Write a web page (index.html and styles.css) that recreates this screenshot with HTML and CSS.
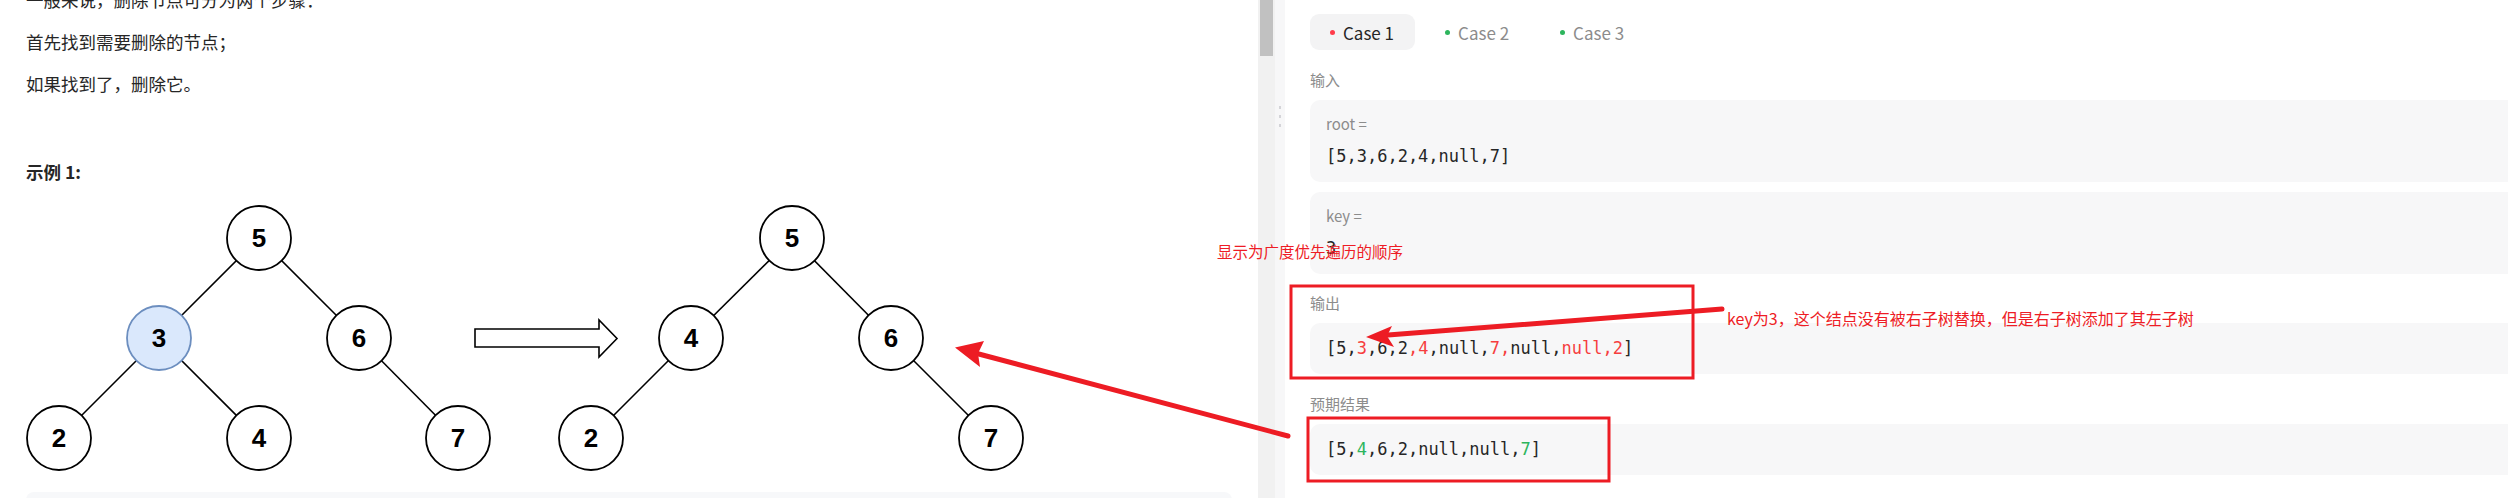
FILE: index.html
```html
<!DOCTYPE html>
<html lang="zh">
<head>
<meta charset="utf-8">
<title>删除二叉搜索树中的节点</title>
<link rel="stylesheet" href="styles.css">
</head>
<body>
<div class="page">
  <div class="left">
    <p class="para">一般来说，删除节点可分为两个步骤：</p>
    <p class="para">首先找到需要删除的节点；</p>
    <p class="para">如果找到了，删除它。</p>
    <p class="example-title"><strong>示例 1:</strong></p>
    <svg class="tree" width="1010" height="290" viewBox="0 0 1010 290">
      <g transform="translate(-26 -195)">
        <g class="edges">
          <line x1="259" y1="238" x2="159" y2="338"/>
          <line x1="259" y1="238" x2="359" y2="338"/>
          <line x1="159" y1="338" x2="59" y2="438"/>
          <line x1="159" y1="338" x2="259" y2="438"/>
          <line x1="359" y1="338" x2="458" y2="438"/>
          <line x1="792" y1="238" x2="691" y2="338"/>
          <line x1="792" y1="238" x2="891" y2="338"/>
          <line x1="691" y1="338" x2="591" y2="438"/>
          <line x1="891" y1="338" x2="991" y2="438"/>
        </g>
        <g class="nodes">
          <circle cx="259" cy="238" r="32"/>
          <circle class="hl" cx="159" cy="338" r="32"/>
          <circle cx="359" cy="338" r="32"/>
          <circle cx="59" cy="438" r="32"/>
          <circle cx="259" cy="438" r="32"/>
          <circle cx="458" cy="438" r="32"/>
          <circle cx="792" cy="238" r="32"/>
          <circle cx="691" cy="338" r="32"/>
          <circle cx="891" cy="338" r="32"/>
          <circle cx="591" cy="438" r="32"/>
          <circle cx="991" cy="438" r="32"/>
        </g>
        <g class="labels">
          <text x="259" y="247">5</text>
          <text x="159" y="347">3</text>
          <text x="359" y="347">6</text>
          <text x="59" y="447">2</text>
          <text x="259" y="447">4</text>
          <text x="458" y="447">7</text>
          <text x="792" y="247">5</text>
          <text x="691" y="347">4</text>
          <text x="891" y="347">6</text>
          <text x="591" y="447">2</text>
          <text x="991" y="447">7</text>
        </g>
        <polygon class="hollow-arrow" points="475,329 599,329 599,320 617,338.5 599,357 599,347 475,347"/>
      </g>
    </svg>
    <div class="pre-block"></div>
  </div>
  <div class="scrollbar"><div class="thumb"></div></div>
  <div class="divider">
    <div class="handle"><span></span><span></span><span></span></div>
  </div>
  <div class="right">
    <div class="tabs">
      <div class="tab active"><span class="dot red"></span><span>Case 1</span></div>
      <div class="tab"><span class="dot green"></span><span>Case 2</span></div>
      <div class="tab"><span class="dot green"></span><span>Case 3</span></div>
    </div>
    <div class="label first">输入</div>
    <div class="box">
      <div class="var">root =</div>
      <div class="code">[5,3,6,2,4,null,7]</div>
    </div>
    <div class="box second">
      <div class="var">key =</div>
      <div class="code">3</div>
    </div>
    <div class="label out">输出</div>
    <div class="box single">
      <div class="code">[5,<span class="r">3</span>,6,2<span class="r">,4</span>,null,<span class="r">7,</span>null,<span class="r">null,2</span>]</div>
    </div>
    <div class="label out">预期结果</div>
    <div class="box single">
      <div class="code">[5,<span class="g">4</span>,6,2,null,null,<span class="g">7</span>]</div>
    </div>
  </div>
</div>

<svg class="overlay" width="2508" height="498" viewBox="0 0 2508 498">
  <rect x="1291" y="286" width="402" height="92"/>
  <rect x="1308" y="418" width="301" height="63"/>
  <line x1="1288" y1="436" x2="975" y2="353"/>
  <polygon class="head" points="955,347.5 984,341 978,353.5 980,367"/>
  <line x1="1722" y1="309" x2="1388" y2="335"/>
  <polygon class="head" points="1366,337 1392,326 1387,336 1394,347"/>
</svg>
<div class="note note1">显示为广度优先遍历的顺序</div>
<div class="note note2">key为3，这个结点没有被右子树替换，但是右子树添加了其左子树</div>
</body>
</html>
```

FILE: styles.css
```css
html, body {
  margin: 0;
  padding: 0;
  width: 2508px;
  height: 498px;
  overflow: hidden;
  background: #ffffff;
}

body {
  position: relative;
  font-family: "Noto Sans CJK SC", "Noto Sans", sans-serif;
  color: #262626;
}

.page {
  display: flex;
  height: 498px;
  overflow: hidden;
}

/* ---------- left description panel ---------- */
.left {
  flex: 0 0 1258px;
  box-sizing: border-box;
  padding: 0 26px;
  background: #ffffff;
  overflow: hidden;
}

.para {
  margin: 0 0 14px;
  font-size: 17.5px;
  line-height: 28px;
  color: #262626;
}

.para:first-child {
  margin-top: -14px;
}

.example-title {
  margin: 60px 0 0;
  font-size: 17.5px;
  line-height: 28px;
  color: #262626;
}

.example-title strong {
  font-weight: 700;
}

.tree {
  display: block;
  margin-top: 9px;
}

.edges line {
  stroke: #000000;
  stroke-width: 1.6;
}

.nodes circle {
  fill: #ffffff;
  stroke: #000000;
  stroke-width: 1.8;
}

.nodes circle.hl {
  fill: #dae8fc;
  stroke: #6c8ebf;
}

.labels text {
  font-family: "Liberation Sans", Arial, sans-serif;
  font-weight: 700;
  font-size: 26px;
  text-anchor: middle;
  fill: #000000;
}

.hollow-arrow {
  fill: #ffffff;
  stroke: #000000;
  stroke-width: 1.6;
}

.pre-block {
  margin-top: 7px;
  height: 60px;
  border-radius: 8px;
  background: #f7f8fa;
}

/* ---------- scrollbar & divider ---------- */
.scrollbar {
  flex: 0 0 17px;
  background: #f1f1f1;
  display: flex;
  justify-content: center;
}

.thumb {
  width: 13px;
  height: 56px;
  background: #c1c1c1;
}

.divider {
  flex: 0 0 10px;
  background: #f7f7f8;
  display: flex;
  justify-content: center;
}

.handle {
  margin-top: 106px;
  display: flex;
  flex-direction: column;
  gap: 6px;
}

.handle span {
  display: block;
  width: 2px;
  height: 3px;
  background: #d4d4d8;
}

/* ---------- right testcase panel ---------- */
.right {
  flex: 0 0 1300px;
  box-sizing: border-box;
  padding: 14px 0 0 25px;
  background: #ffffff;
}

.tabs {
  display: flex;
  gap: 10px;
  height: 36px;
}

.tab {
  display: flex;
  align-items: center;
  gap: 8px;
  box-sizing: border-box;
  height: 36px;
  padding: 0 21px 0 20px;
  border-radius: 9px;
  font-size: 17px;
  color: #8c8c8c;
}

.tab.active {
  background: #f3f3f4;
  color: #262626;
}

.dot {
  width: 5px;
  height: 5px;
  border-radius: 50%;
}

.dot.red {
  background: #ff3b4a;
}

.dot.green {
  background: #2db55d;
}

.label {
  font-size: 15px;
  line-height: 20px;
  color: #8c8c8c;
}

.label.first {
  margin-top: 20px;
  margin-bottom: 10px;
}

.label.out {
  margin-top: 19px;
  margin-bottom: 10px;
}

.label.out + .box + .label.out {
  margin-top: 20px;
}

.box {
  box-sizing: border-box;
  width: 1300px;
  padding: 14px 16px;
  border-radius: 10px;
  background: #f7f7f8;
}

.box.second {
  margin-top: 10px;
}

.box.single {
  padding: 13px 16px;
}

.var {
  font-size: 15px;
  line-height: 20px;
  color: #8c8c8c;
  margin-bottom: 10px;
}

.code {
  font-family: "DejaVu Sans Mono", "Liberation Mono", monospace;
  font-size: 17px;
  line-height: 24px;
  color: #262626;
}

.box.single .code {
  line-height: 25px;
}

.code .r {
  color: #f63e3e;
}

.code .g {
  color: #2db55d;
}

/* ---------- annotations ---------- */
.overlay {
  position: absolute;
  top: 0;
  left: 0;
  pointer-events: none;
}

.overlay rect {
  fill: none;
  stroke: #ed1c24;
  stroke-width: 3;
}

.overlay line {
  stroke: #ed1c24;
  stroke-width: 5;
  stroke-linecap: round;
}

.overlay .head {
  fill: #ed1c24;
}

.note {
  position: absolute;
  color: #ee1c25;
  line-height: 20px;
  white-space: nowrap;
  font-family: "Noto Sans CJK SC", "Noto Sans", sans-serif;
}

.note1 {
  left: 1217px;
  top: 241px;
  font-size: 15.5px;
}

.note2 {
  left: 1727px;
  top: 308px;
  font-size: 16px;
}
```
